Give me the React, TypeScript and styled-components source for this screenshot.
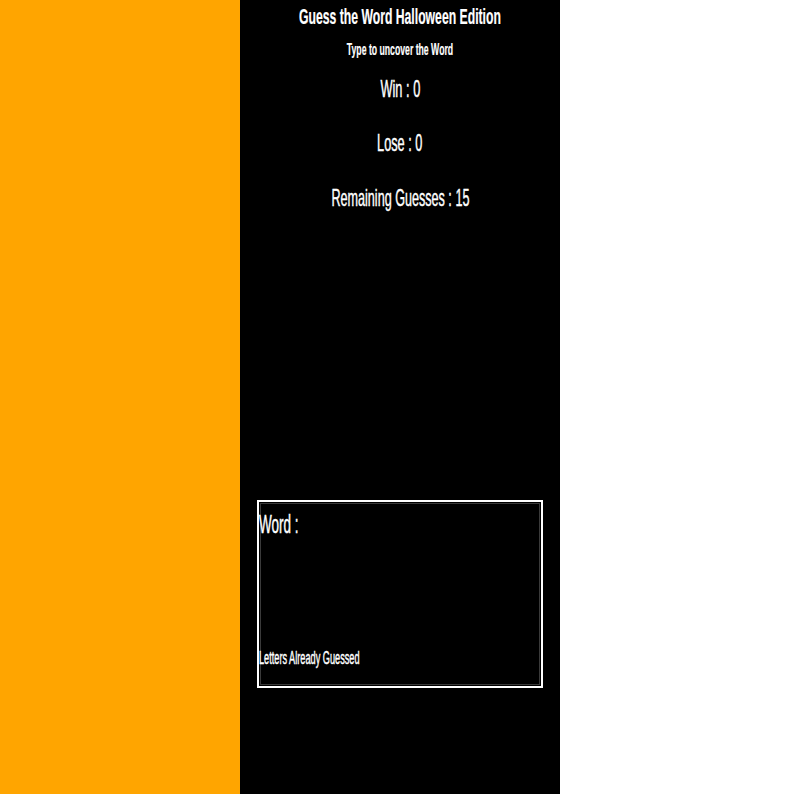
import React from "react";
import styled, { createGlobalStyle } from "styled-components";

const GlobalStyle = createGlobalStyle`
  html, body {
    margin: 0;
    padding: 0;
    background: #ffffff;
  }
  body {
    font-family: "Liberation Sans", Arial, sans-serif;
  }
`;

const Page = styled.div`
  display: grid;
  grid-template-columns: 240px 320px 240px;
  height: 794px;
`;

const SidePanel = styled.div`
  background: #ffa500;
`;

const EmptyPanel = styled.div`
  background: #ffffff;
`;

const GamePanel = styled.main`
  background: #000000;
  color: #ffffff;
  display: flex;
  flex-direction: column;
  padding: 6px 17px 0;
  min-width: 0;
`;

const Line = styled.div<{ $size: number; $bold?: boolean; $gap?: number; $align?: "center" | "left" }>`
  display: flex;
  justify-content: ${(p) => (p.$align === "left" ? "flex-start" : "center")};
  font-size: ${(p) => p.$size}px;
  font-weight: ${(p) => (p.$bold ? 700 : 400)};
  -webkit-text-stroke: ${(p) => (p.$bold ? "0.2px" : "0.45px")} #ffffff;
  line-height: 1;
  margin-top: ${(p) => p.$gap ?? 0}px;
  white-space: nowrap;
`;

const Narrow = styled.span<{ $scale: number; $origin?: "center" | "left" }>`
  display: inline-block;
  flex: none;
  transform: scaleX(${(p) => p.$scale});
  transform-origin: ${(p) => p.$origin ?? "center"} center;
`;

const WordBox = styled.section`
  box-sizing: border-box;
  margin-top: 290px;
  height: 188px;
  border: 2px solid #ffffff;
  box-shadow: inset 0 0 0 1px #000000, inset 0 0 0 2px #3a3a3a;
  display: flex;
  flex-direction: column;
  padding: 9px 0 19px;
`;

const WordDisplay = styled.div`
  flex: 1;
`;

export default function App() {
  return (
    <>
      <GlobalStyle />
      <Page>
        <SidePanel />
        <GamePanel>
          <Line $size={22} $bold>
            <Narrow $scale={0.555}>Guess the Word Halloween Edition</Narrow>
          </Line>
          <Line $size={16.5} $bold $gap={13}>
            <Narrow $scale={0.526}>Type to uncover the Word</Narrow>
          </Line>
          <Line $size={24} $gap={19}>
            <Narrow $scale={0.533}>Win : 0</Narrow>
          </Line>
          <Line $size={24} $gap={30}>
            <Narrow $scale={0.53}>Lose : 0</Narrow>
          </Line>
          <Line $size={24} $gap={31}>
            <Narrow $scale={0.525}>Remaining Guesses : 15</Narrow>
          </Line>
          <WordBox>
            <Line $size={26} $align="left">
              <Narrow $scale={0.52} $origin="left">Word :</Narrow>
            </Line>
            <WordDisplay />
            <Line $size={18} $align="left">
              <Narrow $scale={0.51} $origin="left">Letters Already Guessed</Narrow>
            </Line>
          </WordBox>
        </GamePanel>
        <EmptyPanel />
      </Page>
    </>
  );
}
